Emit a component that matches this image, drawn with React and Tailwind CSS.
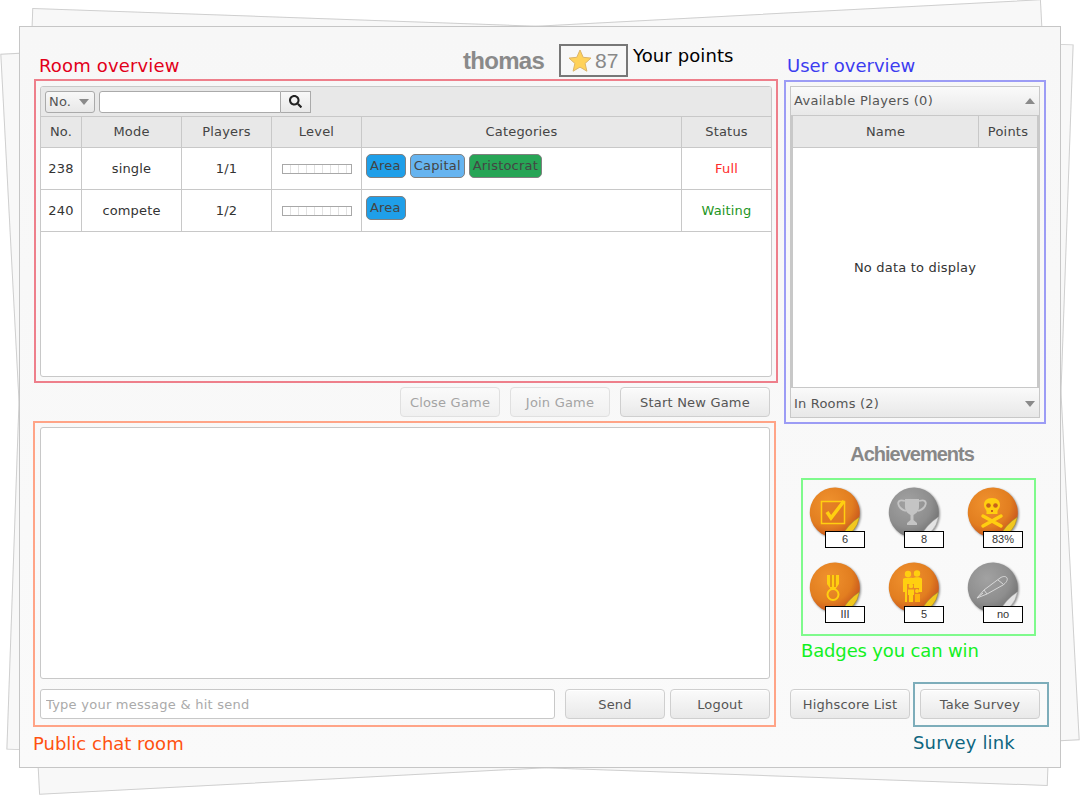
import React from "react";
import { FaSearch } from "react-icons/fa";

const columns = "grid grid-cols-[41px_100px_90px_90px_320px_89px]";
const btn =
  "flex h-[30px] shrink-0 items-center justify-center rounded-[4px] border border-[#cfcfcf] bg-gradient-to-b from-[#fbfbfb] to-[#e9e9e9] pt-px text-[13px] tracking-[0.2px] text-[#555] shadow-[0_1px_0_#fff_inset]";
const btnOff =
  "flex h-[30px] shrink-0 items-center justify-center rounded-[4px] border border-[#e0e0e0] bg-gradient-to-b from-[#fafafa] to-[#f0f0f0] pt-px text-[13px] tracking-[0.2px] text-[#a4a4a4]";
const note = "text-[18px] leading-[20px]";

const Triangle = ({ up, className }) => (
  <svg width="10" height="6" viewBox="0 0 10 6" className={className}>
    <path d={up ? "M0 6 L5 0 L10 6 Z" : "M0 0 L5 6 L10 0 Z"} fill="#8a8a8a" />
  </svg>
);

const LevelBar = () => (
  <div className="flex h-[10px] w-[70px] overflow-hidden border border-[#a8a8a8] bg-white">
    {[0, 1, 2, 3, 4, 5, 6, 7, 8].map((i) => (
      <div key={i} className="h-full w-[8px] shrink-0 border-r border-[#e2e2e2]" />
    ))}
  </div>
);

const Tag = ({ label, color }) => (
  <div className={`flex h-[24px] items-center rounded-[5px] border border-[#808080] pl-[3px] text-[13px] tracking-[0.2px] text-[#444] ${color}`}>
    {label}
  </div>
);

const RoomRow = ({ no, mode, players, tags, status, statusColor }) => (
  <div className={`${columns} h-[42px] border-b border-[#c8c8c8] bg-white text-[13px] tracking-[0.15px] text-[#333]`}>
    <div className="flex items-center justify-center border-r border-[#c8c8c8]">{no}</div>
    <div className="flex items-center justify-center border-r border-[#c8c8c8]">{mode}</div>
    <div className="flex items-center justify-center border-r border-[#c8c8c8]">{players}</div>
    <div className="flex items-center justify-center border-r border-[#c8c8c8]">
      <LevelBar />
    </div>
    <div className="flex gap-[4px] border-r border-[#c8c8c8] pl-[4px] pt-[6px]">{tags}</div>
    <div className={`flex items-center justify-center ${statusColor}`}>{status}</div>
  </div>
);

const HeadCell = ({ children, last }) => (
  <div className={`flex items-center justify-center text-[13px] tracking-[0.2px] text-[#444] ${last ? "" : "border-r border-[#c8c8c8]"}`}>
    {children}
  </div>
);

const BadgeDisc = ({ gray, children }) => {
  const id = gray ? "discGray" : "discOrange";
  return (
    <svg width="54" height="54" viewBox="0 0 54 54" className="-ml-px drop-shadow-[1px_1px_1px_rgba(0,0,0,0.45)]">
      <defs>
        <radialGradient id={id} cx="38%" cy="32%" r="72%">
          <stop offset="0%" stopColor={gray ? "#a2a2a2" : "#f0922e"} />
          <stop offset="65%" stopColor={gray ? "#8e8e8e" : "#e27e20"} />
          <stop offset="100%" stopColor={gray ? "#707070" : "#c4501c"} />
        </radialGradient>
      </defs>
      <path d="M50.400 30 A25 25 0 1 0 33 49.400 Q38 38 50.400 30 Z" fill={`url(#${id})`} />
      <path d="M50.400 30 Q38 38 33 49.400 Q47 47 50.400 30 Z" fill={gray ? "#e4e4e4" : "#f2c81f"} stroke={gray ? "#a0a0a0" : "#9a7d28"} strokeWidth="0.5" />
      {children}
    </svg>
  );
};

const yellow = "#ffcf10";
const light = "#c4c4c4";

const badges = [
  {
    label: "6",
    icon: (
      <g fill="none" stroke={yellow}>
        <rect x="12.500" y="14.500" width="23" height="22" strokeWidth="1.5" fill="#d9701e" fillOpacity="0.5" />
        <path d="M18 25 L22 31 L35 14" strokeWidth="3.500" />
      </g>
    ),
  },
  {
    label: "8",
    gray: true,
    icon: (
      <g>
        <path d="M17 12 H31 V20 C31 25 27 27 25.500 28 V33 L29 36 V38 H19 V36 L22.500 33 V28 C21 27 17 25 17 20 Z" fill={light} />
        <path d="M17 14 C11 12 9 15 11 19 C12 21 15 23 18 24 M31 14 C37 12 39 15 37 19 C36 21 33 23 30 24" fill="none" stroke={light} strokeWidth="1.800" />
      </g>
    ),
  },
  {
    label: "83%",
    icon: (
      <g fill={yellow}>
        <path d="M25 11 C30.500 11 33 14 33 18 C33 21 31 22 30.500 24 V27 H19.500 V24 C19 22 17 21 17 18 C17 14 19.500 11 25 11 Z" />
        <circle cx="21.500" cy="18.500" r="2.300" fill="#c6621c" />
        <circle cx="28.500" cy="18.500" r="2.300" fill="#c6621c" />
        <path d="M24 23 H26 V25 H24 Z" fill="#c6621c" />
        <path d="M16 29 L34 39 M34 29 L16 39" stroke={yellow} strokeWidth="3.500" strokeLinecap="round" />
      </g>
    ),
  },
  {
    label: "III",
    icon: (
      <g>
        <path d="M18 13 H30 V22 L26.500 27 H21.500 L18 22 Z" fill={yellow} />
        <path d="M22 13 V25 M26 13 V25" stroke="#d9791c" strokeWidth="1.400" />
        <circle cx="24" cy="32.500" r="5.500" fill="none" stroke={yellow} strokeWidth="2" />
      </g>
    ),
  },
  {
    label: "5",
    icon: (
      <g fill={yellow}>
        <circle cx="20" cy="12" r="3.200" />
        <circle cx="29" cy="11.500" r="3.200" />
        <path d="M15 17 C15 15.500 24 15.500 25 16 C27 15 34 15 34 17 V30 H31 V26 H26 V22 H19 V40 H17 V30 H15 Z" />
        <circle cx="23" cy="24" r="2.300" />
        <circle cx="29" cy="29" r="2" />
        <path d="M20 27.500 H26 V33 H25 V40 H21 V33 H20 Z" />
        <path d="M27 32 H32 V40 H27 Z" fill="#ffb30c" />
      </g>
    ),
  },
  {
    label: "no",
    gray: true,
    icon: (
      <g fill="none" stroke="#d8d8d8" strokeWidth="1">
        <path d="M10 36 L17 28 L33 16 C36 14 39 14 40 16 C41 18 39 21 36 23 L20 32 Z" />
        <path d="M17 28 L20 32 M10 36 L16 31 M31 18 L36 22" />
      </g>
    ),
  },
];

const Badge = ({ label, gray, icon }) => (
  <div className="relative h-[75px] w-[79px]">
    <BadgeDisc gray={gray}>{icon}</BadgeDisc>
    <div className="absolute left-[15px] top-[44px] flex h-[17px] w-[40px] items-center justify-center border border-black bg-white font-['Liberation_Sans',sans-serif] text-[11px] text-[#333]">
      {label}
    </div>
  </div>
);

export default function App() {
  return (
    <div className="relative h-[795px] w-[1080px] overflow-hidden bg-white pl-[19px] pt-[26px] font-['DejaVu_Sans',sans-serif]">
      {/* loose sheets behind the main one */}
      <div className="absolute left-[19px] top-[26px] h-[742px] w-[1042px] rotate-[2deg] border border-[#cfcfcf] bg-[#f8f8f8]" />
      <div className="absolute left-[19px] top-[26px] h-[742px] w-[1042px] -rotate-3 border border-[#cfcfcf] bg-[#f8f8f8]" />

      <div className="relative flex h-[742px] w-[1042px] border border-[#c6c6c6] bg-gradient-to-b from-[#f7f7f7] to-[#fafafa] pl-[14px]">
        {/* left column */}
        <div className="flex w-[744px] flex-col">
          <div className="flex h-[52px]">
            <div className={`${note} w-[429px] pl-[5px] pt-[29px] tracking-[0.15px] text-[#e2001a]`}>Room overview</div>
            <div className="w-[96px] pt-[19px] font-['Liberation_Sans',sans-serif] text-[24px] font-bold leading-[30px] tracking-[-0.7px] text-[#8a8a8a]">
              thomas
            </div>
            <div className="mt-[17px] flex h-[33px] w-[69px] items-center gap-[3px] border-2 border-[#777] pl-[7px] pt-px font-['Liberation_Sans',sans-serif] text-[21px] text-[#888]">
              <svg width="24" height="24" viewBox="0 0 24 24" className="-mt-px">
                <path
                  d="M12 1 L15.200 8.300 L23 9.100 L17.100 14.400 L18.900 22.200 L12 18.100 L5.100 22.200 L6.900 14.400 L1 9.100 L8.800 8.300 Z"
                  fill="#ffd25a"
                  stroke="#dcb468"
                  strokeWidth="1"
                />
              </svg>
              87
            </div>
            <div className={`${note} ml-[5px] pt-[19px] tracking-[0.1px] text-black`}>Your points</div>
          </div>

          {/* room overview */}
          <div className="h-[304px] border-2 border-[#ee7f8b] pb-[4px] pl-[4px] pr-[4px] pt-[5px]">
            <div className="h-full overflow-hidden rounded-[3px] border border-[#c8c8c8] bg-white">
              <div className="flex h-[30px] items-center border-b border-[#c8c8c8] bg-[#e8e8e8] pl-[4px]">
                <div className="flex h-[22px] w-[50px] items-center justify-between rounded-[3px] border border-[#aaa] bg-gradient-to-b from-[#f8f8f8] to-[#e8e8e8] pl-[3px] pr-[5px] pt-px text-[13px] tracking-[0.2px] text-[#555]">
                  No.
                  <Triangle />
                </div>
                <div className="ml-[4px] h-[22px] w-[182px] rounded-l-[3px] border border-[#aaa] bg-white" />
                <div className="flex h-[22px] w-[30px] items-center justify-center border border-l-0 border-[#aaa] bg-gradient-to-b from-[#f8f8f8] to-[#e8e8e8]">
                  <FaSearch className="h-[13px] w-[13px] text-[#222]" />
                </div>
              </div>
              <div className={`${columns} h-[31px] border-b border-[#c8c8c8] bg-[#e8e8e8]`}>
                <HeadCell>No.</HeadCell>
                <HeadCell>Mode</HeadCell>
                <HeadCell>Players</HeadCell>
                <HeadCell>Level</HeadCell>
                <HeadCell>Categories</HeadCell>
                <HeadCell last>Status</HeadCell>
              </div>
              <RoomRow
                no="238"
                mode="single"
                players="1/1"
                status="Full"
                statusColor="text-[#ff2a2a]"
                tags={
                  <>
                    <Tag label="Area" color="bg-[#1f9fe9] pr-[4px]" />
                    <Tag label="Capital" color="bg-[#66b4f0] pr-[3px]" />
                    <Tag label="Aristocrat" color="bg-[#27a556] pr-[3px]" />
                  </>
                }
              />
              <RoomRow
                no="240"
                mode="compete"
                players="1/2"
                status="Waiting"
                statusColor="text-[#1e961e]"
                tags={<Tag label="Area" color="bg-[#1f9fe9] pr-[4px]" />}
              />
            </div>
          </div>

          <div className="mt-[4px] flex h-[30px] justify-end gap-[10px] pr-[8px]">
            <div className={`${btnOff} w-[100px]`}>Close Game</div>
            <div className={`${btnOff} w-[100px]`}>Join Game</div>
            <div className={`${btn} w-[150px]`}>Start New Game</div>
          </div>

          {/* chat */}
          <div className="-ml-px mt-[4px] flex h-[306px] w-[743px] flex-col border-2 border-[#ffa487] pl-[5px] pr-[4px] pt-[4px]">
            <div className="h-[252px] rounded-[3px] border border-[#c8c8c8] bg-white" />
            <div className="mt-[10px] flex gap-[10px]">
              <input
                readOnly
                placeholder="Type your message & hit send"
                className="h-[30px] w-[515px] rounded-[3px] border border-[#c8c8c8] bg-white pl-[5px] text-[13px] tracking-[0.25px] placeholder:text-[#aaa]"
              />
              <div className={`${btn} w-[100px]`}>Send</div>
              <div className={`${btn} -ml-[5px] w-[100px]`}>Logout</div>
            </div>
          </div>
          <div className={`${note} mt-[7px] -ml-px text-[#ff5210]`}>Public chat room</div>
        </div>

        {/* right column */}
        <div className="ml-[6px] flex w-[262px] flex-col">
          <div className={`${note} h-[53px] pl-[3px] pt-[29px] text-[#3c3cf0]`}>User overview</div>
          <div className="h-[344px] border-2 border-[#9c9cf5] p-[4px]">
            <div className="flex h-full flex-col border border-[#c8c8c8] bg-white">
              <div className="flex h-[29px] shrink-0 items-center justify-between border-b border-[#c8c8c8] bg-gradient-to-b from-[#fafafa] to-[#e8e8e8] pl-[3px] pr-[4px] text-[13px] tracking-[0.3px] text-[#555]">
                Available Players (0)
                <Triangle up />
              </div>
              <div className="flex min-h-0 flex-1 flex-col border-x-2 border-[#c8c8c8]">
                <div className="grid h-[32px] shrink-0 grid-cols-[186px_1fr] border-b border-[#c8c8c8] bg-[#e8e8e8]">
                  <HeadCell>Name</HeadCell>
                  <HeadCell last>Points</HeadCell>
                </div>
                <div className="flex flex-1 items-center justify-center pt-px text-[13px] tracking-[0.2px] text-[#333]">No data to display</div>
              </div>
              <div className="flex h-[30px] shrink-0 items-center justify-between border-t border-[#c8c8c8] bg-gradient-to-b from-[#fafafa] to-[#e8e8e8] pl-[3px] pr-[4px] pt-[2px] text-[13px] tracking-[0.2px] text-[#555]">
                In Rooms (2)
                <Triangle />
              </div>
            </div>
          </div>

          <div className="h-[54px] w-[256px] pt-[17px] text-center font-['Liberation_Sans',sans-serif] text-[20px] font-bold leading-[26px] tracking-[-1px] text-[#888]">
            Achievements
          </div>
          <div className="ml-[17px] grid h-[158px] w-[235px] grid-cols-[79px_79px_69px] grid-rows-[75px_75px] border-2 border-[#7ffa8c] pl-[7px] pt-[7px]">
            {badges.map((b) => (
              <Badge key={b.label} {...b} />
            ))}
          </div>
          <div className={`${note} ml-[17px] h-[46px] pt-[5px] tracking-[-0.15px] text-[#12f022]`}>Badges you can win</div>

          <div className="flex items-start">
            <div className={`${btn} ml-[6px] mt-[7px] w-[120px]`}>Highscore List</div>
            <div className="ml-[3px] h-[45px] w-[136px] shrink-0 border-2 border-[#7dadba] pl-[5px] pt-[5px]">
              <div className={`${btn} w-[120px]`}>Take Survey</div>
            </div>
          </div>
          <div className={`${note} ml-[129px] mt-[6px] tracking-[0.15px] text-[#0e6680]`}>Survey link</div>
        </div>
      </div>
    </div>
  );
}
